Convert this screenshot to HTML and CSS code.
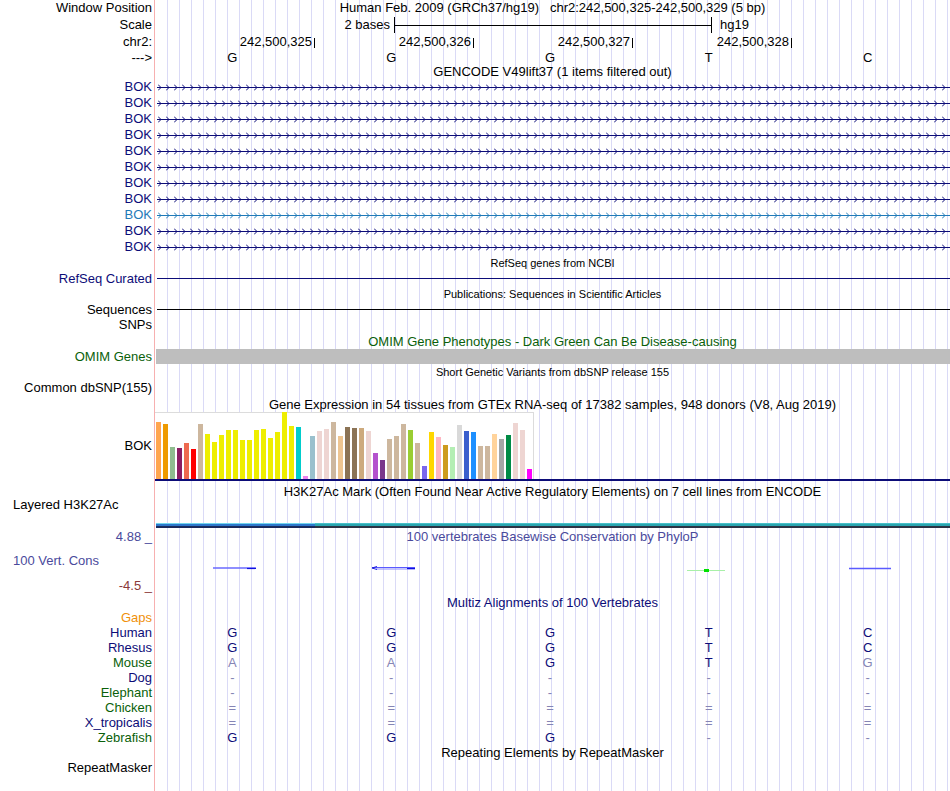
FILE: index.html
```html
<!DOCTYPE html>
<html lang="en">
<head>
    <meta charset="UTF-8">
    <title>UCSC Genome Browser - chr2:242,500,325-242,500,329</title>
    <link rel="stylesheet" href="styles.css">
</head>
<body>
<div class="browser">
    <div class="row pos">
        <div class="label">Window Position</div>
        <div class="data title">Human Feb. 2009 (GRCh37/hg19)&nbsp;&nbsp;&nbsp;chr2:242,500,325-242,500,329 (5 bp)</div>
    </div>
    <div class="row scale">
        <div class="label">Scale</div>
        <div class="data scale-bar">
            <span class="scale-text">2 bases</span>
            <span class="scale-line"></span>
            <span class="scale-db">hg19</span>
        </div>
    </div>
    <div class="row ruler">
        <div class="label">chr2:</div>
        <div class="data ticks">
            <div class="tick"><span>242,500,325</span><i></i></div>
            <div class="tick"><span>242,500,326</span><i></i></div>
            <div class="tick"><span>242,500,327</span><i></i></div>
            <div class="tick"><span>242,500,328</span><i></i></div>
        </div>
    </div>
    <div class="row bases">
        <div class="label">---&gt;</div>
        <div class="data seq"><span>G</span><span>G</span><span>G</span><span>T</span><span>C</span></div>
    </div>
    <div class="row gencode-title">
        <div class="label"></div>
        <div class="data title">GENCODE V49lift37 (1 items filtered out)</div>
    </div>

    <div id="genes"></div>

    <div class="row small-title">
        <div class="label"></div>
        <div class="data title">RefSeq genes from NCBI</div>
    </div>
    <div class="row refseq">
        <div class="label navy">RefSeq Curated</div>
        <div class="data"><div class="hline navy-line"></div></div>
    </div>
    <div class="row small-title pub">
        <div class="label"></div>
        <div class="data title">Publications: Sequences in Scientific Articles</div>
    </div>
    <div class="row sequences">
        <div class="label">Sequences</div>
        <div class="data"><div class="hline black-line"></div></div>
    </div>
    <div class="row snps">
        <div class="label">SNPs</div>
        <div class="data"></div>
    </div>
    <div class="row omim-title">
        <div class="label"></div>
        <div class="data title green">OMIM Gene Phenotypes - Dark Green Can Be Disease-causing</div>
    </div>
    <div class="row omim">
        <div class="label green">OMIM Genes</div>
        <div class="data"><div class="omim-bar"></div></div>
    </div>
    <div class="row small-title dbsnp">
        <div class="label"></div>
        <div class="data title">Short Genetic Variants from dbSNP release 155</div>
    </div>
    <div class="row common">
        <div class="label">Common dbSNP(155)</div>
        <div class="data"></div>
    </div>
    <div class="row gtex-title">
        <div class="label"></div>
        <div class="data title">Gene Expression in 54 tissues from GTEx RNA-seq of 17382 samples, 948 donors (V8, Aug 2019)</div>
    </div>
    <div class="row gtex">
        <div class="label">BOK</div>
        <div class="data"><div class="gtex-frame" id="gtex"></div></div>
    </div>

    <div class="row h3k">
        <div class="label left">Layered H3K27Ac</div>
        <div class="data">
            <div class="title">H3K27Ac Mark (Often Found Near Active Regulatory Elements) on 7 cell lines from ENCODE</div>
            <div class="h3k-line l1"></div>
            <div class="h3k-line l2"></div>
            <div class="h3k-line l3"></div>
        </div>
    </div>

    <div class="row cons">
        <div class="label cons-labels">
            <div class="cons-max">4.88 _</div>
            <div class="cons-name">100 Vert. Cons</div>
            <div class="cons-min">-4.5 _</div>
        </div>
        <div class="data">
            <div class="title cons-title">100 vertebrates Basewise Conservation by PhyloP</div>
            <svg class="cons-plot" width="795" height="50">
                <line x1="58" y1="22" x2="101" y2="22" stroke="#6a6aff" stroke-width="1.6"/>
                <line x1="92" y1="22.5" x2="101" y2="22.5" stroke="#1010e0" stroke-width="1.2"/>
                <line x1="217" y1="21.5" x2="260" y2="21.5" stroke="#5a5aff" stroke-width="1"/>
                <line x1="221" y1="23" x2="260" y2="23" stroke="#8a8aff" stroke-width="1"/>
                <polyline points="222,20.5 217,22 222,23.5" fill="none" stroke="#2020e0" stroke-width="1"/>
                <line x1="252" y1="22.5" x2="260" y2="22.5" stroke="#1010e0" stroke-width="1.2"/>
                <line x1="532" y1="24.5" x2="570" y2="24.5" stroke="#a8f0a8" stroke-width="1"/>
                <rect x="549" y="23" width="5" height="3" fill="#00e000"/>
                <line x1="694" y1="22.5" x2="736" y2="22.5" stroke="#5a5aff" stroke-width="1.3"/>
            </svg>
        </div>
    </div>

    <div class="row multiz-title">
        <div class="label"></div>
        <div class="data title navy">Multiz Alignments of 100 Vertebrates</div>
    </div>
    <div class="row species">
        <div class="label orange">Gaps</div>
        <div class="data seq"></div>
    </div>
    <div id="species"></div>

    <div class="row repeat-title">
        <div class="label"></div>
        <div class="data title">Repeating Elements by RepeatMasker</div>
    </div>
    <div class="row repeat">
        <div class="label">RepeatMasker</div>
        <div class="data"></div>
    </div>
</div>

<svg class="defs" width="0" height="0">
    <defs>
        <pattern id="chevNavy" patternUnits="userSpaceOnUse" x="3" y="0" width="8" height="16">
            <polyline points="0,5.5 3,8.5 0,11.5" fill="none" stroke="#0c0c78" stroke-width="1"/>
        </pattern>
        <pattern id="chevLight" patternUnits="userSpaceOnUse" x="3" y="0" width="8" height="16">
            <polyline points="0,5.5 3,8.5 0,11.5" fill="none" stroke="#1f7ab8" stroke-width="1"/>
        </pattern>
    </defs>
</svg>

<script>
    // gencode transcript rows
    const genes = document.getElementById("genes");
    let html = "";
    for (let i = 0; i < 11; i++) {
        const light = i === 8;
        html += `
            <div class="row gene">
                <div class="label ${light ? "light" : "navy"}">BOK</div>
                <div class="data">
                    <svg width="795" height="16">
                        <line x1="2" y1="8.5" x2="795" y2="8.5" stroke="${light ? "#1f7ab8" : "#0c0c78"}" stroke-width="1"/>
                        <rect x="2" y="0" width="793" height="16" fill="url(#${light ? "chevLight" : "chevNavy"})"/>
                    </svg>
                </div>
            </div>`;
    }
    genes.innerHTML = html;

    // GTEx tissue medians (bar height in px) and tissue colours
    const heights = [57,55,32,31,36,30,55,45,37,44,49,49,39,39,49,50,41,47,67,53,52,3,43,48,50,57,43,52,51,51,48,26,19,40,43,55,49,36,13,47,42,34,32,54,48,47,33,33,45,40,44,56,49,10];
    const colors = ["#FFA54F","#EE9A00","#8FBC8F","#8B1C62","#EE6A50","#FF0000","#CDB79E",
        "#EEEE00","#EEEE00","#EEEE00","#EEEE00","#EEEE00","#EEEE00","#EEEE00","#EEEE00","#EEEE00","#EEEE00","#EEEE00","#EEEE00","#EEEE00",
        "#00CDCD","#EE82EE","#9AC0CD","#EED5D2","#EED5D2","#CDB79E","#EEC591","#8B7355","#8B7355","#CDAA7D","#EED5D2",
        "#B452CD","#7A378B","#CDB79E","#CDB79E","#CDB79E","#9ACD32","#CDB79E","#7A67EE","#FFD700","#FFB6C1","#CD9B1D",
        "#B4EEB4","#D9D9D9","#3A5FCD","#1E90FF","#CDB79E","#CDB79E","#FFD39B","#A6A6A6","#008B45","#EED5D2","#EED5D2","#FF00FF"];
    const gtex = document.getElementById("gtex");
    heights.forEach((h, i) => {
        const bar = document.createElement("div");
        bar.className = "bar";
        bar.style.height = h + "px";
        bar.style.background = colors[i];
        gtex.appendChild(bar);
    });

    // multiz rows: [name, label colour, bases], lower case = faded
    const species = [
        ["Human", "navy", "GGGTC"],
        ["Rhesus", "navy", "GGGTC"],
        ["Mouse", "green", "aaGTg"],
        ["Dog", "navy", "-----"],
        ["Elephant", "green", "-----"],
        ["Chicken", "green", "====="],
        ["X_tropicalis", "navy", "====="],
        ["Zebrafish", "green", "GGG--"]
    ];
    let rows = "";
    species.forEach(([name, cls, bases]) => {
        let cells = "";
        for (const b of bases) {
            const faded = b === "-" || b === "=" || b === b.toLowerCase();
            cells += `<span class="${faded ? "faded" : ""}">${b.toUpperCase()}</span>`;
        }
        rows += `
            <div class="row species">
                <div class="label ${cls}">${name}</div>
                <div class="data seq navy">${cells}</div>
            </div>`;
    });
    document.getElementById("species").innerHTML = rows;
</script>
</body>
</html>
```

FILE: styles.css
```css
body {
    margin: 0;
    font-family: "Liberation Sans", Arial, sans-serif;
    font-size: 13px;
    color: #000;
    background-color: #fff;
}
.browser {
    width: 950px;
    min-height: 791px;
    overflow: hidden;
    background-image:
        linear-gradient(#f7b0b0, #f7b0b0),
        repeating-linear-gradient(to right, transparent 0 11px, #dadaf6 11px 12px);
    background-size: 1px 100%, 794px 100%;
    background-position: 154px 0, 156px 0;
    background-repeat: no-repeat;
}
.defs {
    display: block;
}
.row {
    display: grid;
    grid-template-columns: 155px 795px;
}
.label {
    text-align: right;
    padding-right: 3px;
    white-space: nowrap;
}
.label.left {
    text-align: left;
    padding-left: 13px;
    padding-right: 0;
}
.data {
    position: relative;
    white-space: nowrap;
}
.title {
    text-align: center;
}
.navy { color: #0c0c78; }
.light { color: #1f7ab8; }
.green { color: #0a5f0a; }
.orange { color: #f0900a; }

/* header rows */
.pos { height: 16px; line-height: 16px; }
.scale { height: 18px; line-height: 18px; }
.scale-bar {
    display: grid;
    grid-template-columns: 239px 318px 1fr;
    align-items: center;
}
.scale-text {
    text-align: right;
    padding-right: 4px;
}
.scale-line {
    height: 16px;
    box-sizing: border-box;
    border-left: 1px solid #000;
    border-right: 1px solid #000;
    background: linear-gradient(#000, #000) center / 100% 1px no-repeat;
}
.scale-db {
    padding-left: 8px;
}
.ruler { height: 16px; line-height: 16px; }
.ticks {
    display: grid;
    grid-template-columns: repeat(5, 159px);
}
.tick {
    display: flex;
    justify-content: flex-end;
    align-items: center;
    margin-right: -1px;
}
.tick span {
    margin-right: 2px;
}
.tick i {
    width: 1px;
    height: 10px;
    margin-top: 2px;
    background: #000;
}
.bases { height: 15px; line-height: 15px; }
.seq {
    display: grid;
    grid-template-columns: repeat(5, 158.8px);
    margin-left: -2px;
    text-align: center;
}
.gencode-title { height: 14px; line-height: 14px; }

/* gene rows */
.gene { height: 16px; line-height: 16px; }
.gene svg {
    display: block;
}

.small-title {
    height: 16px;
    line-height: 16px;
    font-size: 11px;
}
.small-title.pub,
.small-title.dbsnp {
    height: 17px;
    line-height: 17px;
}
.refseq { height: 15px; line-height: 15px; }
.hline {
    height: 1px;
    margin-left: 2px;
}
.refseq .hline { margin-top: 7px; }
.navy-line { background: #0c0c78; }
.black-line { background: #000; }
.sequences { height: 13px; line-height: 13px; }
.sequences .hline { margin-top: 6px; }
.snps { height: 18px; line-height: 18px; }
.omim-title { height: 15px; line-height: 15px; }
.omim { height: 15px; line-height: 15px; }
.omim-bar {
    height: 15px;
    margin-left: 1px;
    background: #bebebe;
}
.common { height: 13px; line-height: 13px; }
.gtex-title {
    height: 18px;
    padding-top: 3px;
    box-sizing: border-box;
    line-height: 15px;
}

/* GTEx bar chart */
.gtex { height: 69px; line-height: 67px; }
.gtex .data {
    border-bottom: 2px solid #0c0c78;
}
.gtex-frame {
    width: 379px;
    height: 67px;
    box-sizing: border-box;
    border-top: 1px solid #dcdcdc;
    border-right: 1px solid #dcdcdc;
    background: #fff;
    padding-left: 1px;
    display: flex;
    align-items: flex-end;
    gap: 2px;
}
.bar {
    width: 5px;
    flex-shrink: 0;
}

/* H3K27Ac */
.h3k { height: 47px; line-height: 14px; }
.h3k .label {
    padding-top: 17px;
}
.h3k .title {
    padding-top: 4px;
    margin-bottom: 24px;
}
.h3k-line {
    margin-left: 1px;
}
.h3k-line.l1 {
    height: 1px;
    background: linear-gradient(to right, #70d4ec 0 159px, #48c0c8 159px);
}
.h3k-line.l2 {
    height: 2px;
    background: linear-gradient(to right, #2c78cc 0 159px, #2aa6b0 159px);
}
.h3k-line.l3 {
    height: 2px;
    background: linear-gradient(to right, #1a2a5c 0 159px, #2c3444 159px);
}

/* conservation */
.cons { height: 68px; }
.cons-labels {
    padding-right: 0;
}
.cons-max {
    height: 18px;
    line-height: 18px;
    padding-right: 3px;
    color: #4a4a9c;
}
.cons-name {
    height: 30px;
    line-height: 30px;
    text-align: left;
    padding-left: 13px;
    color: #4a4a9c;
}
.cons-min {
    height: 20px;
    line-height: 20px;
    padding-right: 3px;
    color: #8b3a3a;
}
.cons-title {
    height: 18px;
    line-height: 18px;
    color: #4a4a9c;
}
.cons-plot {
    display: block;
}

/* multiz */
.multiz-title { height: 14px; line-height: 14px; }
.species { height: 15px; line-height: 15px; }
.species .faded {
    color: #8585b5;
}
.repeat-title { height: 16px; line-height: 16px; }
.repeat { height: 14px; line-height: 14px; }
```
